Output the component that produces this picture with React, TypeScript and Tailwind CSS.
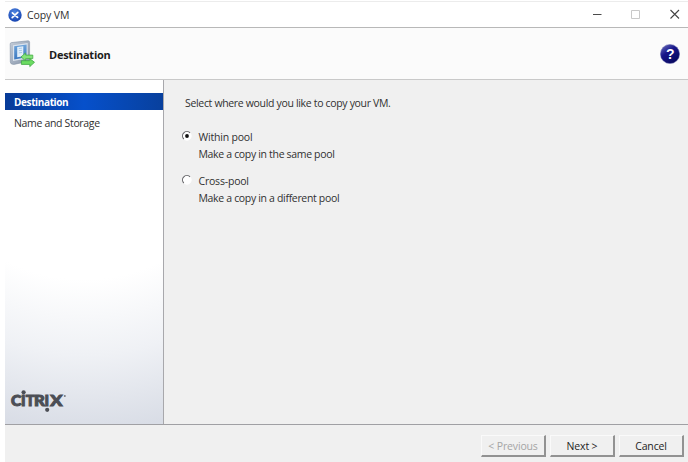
import type { ReactNode } from "react";

function AppIcon() {
  return (
    <svg width="14" height="14" viewBox="0 0 14 14" className="shrink-0">
      <defs>
        <radialGradient id="app" cx="0.45" cy="0.3" r="0.75">
          <stop offset="0" stopColor="#4f86e0" />
          <stop offset="1" stopColor="#123fae" />
        </radialGradient>
      </defs>
      <circle cx="7" cy="7" r="6.7" fill="url(#app)" />
      <path d="M4.4 4.8 9.6 9.4M9.8 4.4 4.2 9.6" stroke="#fff" strokeWidth="1.7" strokeLinecap="round" />
    </svg>
  );
}

function CopyVmIcon() {
  return (
    <svg width="26" height="28" viewBox="0 0 26 28" className="shrink-0">
      <defs>
        <linearGradient id="frame" x1="0" y1="0" x2="1" y2="1">
          <stop offset="0" stopColor="#c3ccd8" />
          <stop offset="1" stopColor="#8593a8" />
        </linearGradient>
        <linearGradient id="screen" x1="0" y1="0" x2="0" y2="1">
          <stop offset="0" stopColor="#6ea4da" />
          <stop offset="1" stopColor="#3b78c0" />
        </linearGradient>
      </defs>
      <path d="M1.2 4.2Q1 3 2.4 2.6L19 .8Q20.5.8 20.6 2.2V19.6Q20.6 21 19 21.4L5 24.4Q1.4 24.6 1.3 22Z" fill="url(#frame)" stroke="#8593a6" strokeWidth=".6" />
      <path d="M4 5.2 18.7 3.1V18.4L4 21Z" fill="#dbe3ed" />
      <path d="M5.2 6.3 17.6 4.6V17.2L5.2 19.4Z" fill="url(#screen)" />
      <path d="M8.2 7.1 14.3 6.3V16.2L8.2 17.3Z" fill="#e2effa" />
      <path d="M9.8 8.5 13 8.1M9.8 10.7 13 10.3M9.8 12.9 13 12.5" stroke="#9bbfe2" strokeWidth=".8" />
      <path d="M12 16.9 16.6 13V15.1H23.8V18.6H16.6V20.8Z" fill="#84e479" stroke="#45ac45" strokeWidth=".8" strokeLinejoin="round" />
      <path d="M25.5 22.3 20.8 26.6V24.4H12.4V20.7H20.8V18.6Z" fill="#6cdc62" stroke="#3fa742" strokeWidth=".8" strokeLinejoin="round" />
    </svg>
  );
}

function HelpIcon() {
  return (
    <svg width="20" height="20" viewBox="0 0 20 20" className="shrink-0">
      <defs>
        <linearGradient id="help" x1="0" y1="0" x2="0.7" y2="1">
          <stop offset="0" stopColor="#7479c2" />
          <stop offset="0.45" stopColor="#17168a" />
          <stop offset="1" stopColor="#07075c" />
        </linearGradient>
      </defs>
      <circle cx="10" cy="10" r="9.6" fill="url(#help)" stroke="#686bac" strokeWidth=".5" />
      <text x="10" y="15" textAnchor="middle" fontFamily="Liberation Sans, sans-serif" fontWeight="700" fontSize="14" fill="#fff">?</text>
    </svg>
  );
}

function CitrixLogo() {
  return (
    <svg width="58" height="24" viewBox="0 0 58 24" className="absolute bottom-3 left-[5px] overflow-visible">
      <g fontFamily="Lato, sans-serif" fontWeight="900" fontSize="15" fill="#4c4e55" stroke="#4c4e55" strokeWidth="1">
        <text x="1" y="18" textLength="10" lengthAdjust="spacingAndGlyphs">C</text>
        <text x="11" y="18">I</text>
        <text x="15.7" y="18" textLength="8.6" lengthAdjust="spacingAndGlyphs">T</text>
        <text x="24" y="18" textLength="10.5" lengthAdjust="spacingAndGlyphs">R</text>
        <text x="34.6" y="18">I</text>
        <text x="40.2" y="18" textLength="11.8" lengthAdjust="spacingAndGlyphs">X</text>
      </g>
      <circle cx="13.6" cy="4.3" r="2.1" fill="#4c4e55" />
      <circle cx="37.2" cy="21.8" r="2.1" fill="#4c4e55" />
      <circle cx="54.8" cy="8" r="1" fill="#74767d" />
    </svg>
  );
}

function Radio({ checked = false }: { checked?: boolean }) {
  return (
    <svg width="10" height="10" viewBox="0 0 10 10" className="-mt-0.5 shrink-0">
      <circle cx="5" cy="5" r="4.2" fill="#fff" stroke="#fff" />
      <path d="M1.8 8A4.2 4.2 0 0 1 8 1.8" fill="none" stroke="#67676b" strokeWidth="1.1" />
      {checked && <circle cx="5" cy="5" r="1.9" fill="#111" />}
    </svg>
  );
}

function Option({ label, detail, checked, className }: { label: string; detail: ReactNode; checked?: boolean; className: string }) {
  return (
    <div className={className}>
      <div className="flex h-[17px] items-center gap-[6.5px]">
        <Radio checked={checked} />
        <span className="pt-0.5 tracking-[-0.2px]">{label}</span>
      </div>
      <div className="flex h-[17px] items-center pt-0.5 pl-[16.5px]">{detail}</div>
    </div>
  );
}

function Button({ children, disabled }: { children: ReactNode; disabled?: boolean }) {
  return (
    <button
      disabled={disabled}
      className="h-[22px] w-[65px] border-t border-r-2 border-b-2 border-l border-t-[#fafafa] border-r-[#929292] border-b-[#929292] border-l-[#fafafa] bg-[#f0f0f0] pt-0.5 leading-none tracking-[-0.15px] text-[#242424] disabled:text-[#a5a5a5]"
    >
      {children}
    </button>
  );
}

export default function App() {
  return (
    <div className="flex h-[462px] w-[688px] flex-col overflow-hidden bg-white pt-px pl-[5px] font-['Open_Sans',sans-serif] text-[10.5px] leading-none tracking-[-0.33px] whitespace-nowrap text-[#303030]">
      <div className="flex h-[27px] shrink-0 items-center border-t border-b border-t-[#ececec] border-b-[#b8b8b8] pl-[3px]">
        <AppIcon />
        <span className="ml-[5px] pt-px tracking-[-0.1px]">Copy VM</span>
        <svg width="96" height="12" viewBox="0 0 96 12" className="-mt-1 mr-1 ml-auto" fill="none">
          <path d="M5 7.5H13.5" stroke="#4b4b4b" />
          <path d="M43.5 3.5H51.5V11.5H43.5Z" stroke="#c9c9c9" />
          <path d="M82.5 3 91 11.5M91 3 82.5 11.5" stroke="#444" strokeWidth="1.1" />
        </svg>
      </div>
      <div className="flex h-[52px] shrink-0 items-center border-b border-[#c9c9c9] bg-[#fbfbfb] pr-2 pl-1">
        <CopyVmIcon />
        <span className="ml-3.5 pt-0.5 text-[11px] font-bold tracking-[-0.25px] text-[#1d1d1d]">Destination</span>
        <div className="ml-auto flex">
          <HelpIcon />
        </div>
      </div>
      <div className="flex h-[345px] shrink-0 border-b border-[#a0a0a4] bg-[#f0f0f0]">
        <div className="relative w-[159px] shrink-0 border-r border-[#a8a8ac] bg-[radial-gradient(ellipse_200%_100%_at_50%_0%,#fff_0%,#fff_58%,#eff1f5_80%,#d9dde6_102%)] pt-[13px]">
          <div className="flex h-[17px] items-center bg-[linear-gradient(to_right,#073b98,#0650cb_50%,#08409d)] pt-px pl-[9px] text-[10px] font-bold tracking-[-0.38px] text-white">
            Destination
          </div>
          <div className="mt-[4px] flex h-[17px] items-center pt-0.5 pl-[9px]">Name and Storage</div>
          <CitrixLogo />
        </div>
        <div className="pt-[14px] pl-[18px]">
          <div className="flex h-[17px] items-center pt-0.5 pl-[3px]">Select where would you like to copy your VM.</div>
          <Option className="mt-[17px]" checked label="Within pool" detail="Make a copy in the same pool" />
          <Option className="mt-[10px]" label="Cross-pool" detail="Make a copy in a different pool" />
        </div>
      </div>
      <div className="flex grow justify-end gap-1 bg-[#f0f0f0] pt-[10px] pr-1">
        <Button disabled>&lt; Previous</Button>
        <Button>Next &gt;</Button>
        <Button>Cancel</Button>
      </div>
    </div>
  );
}
